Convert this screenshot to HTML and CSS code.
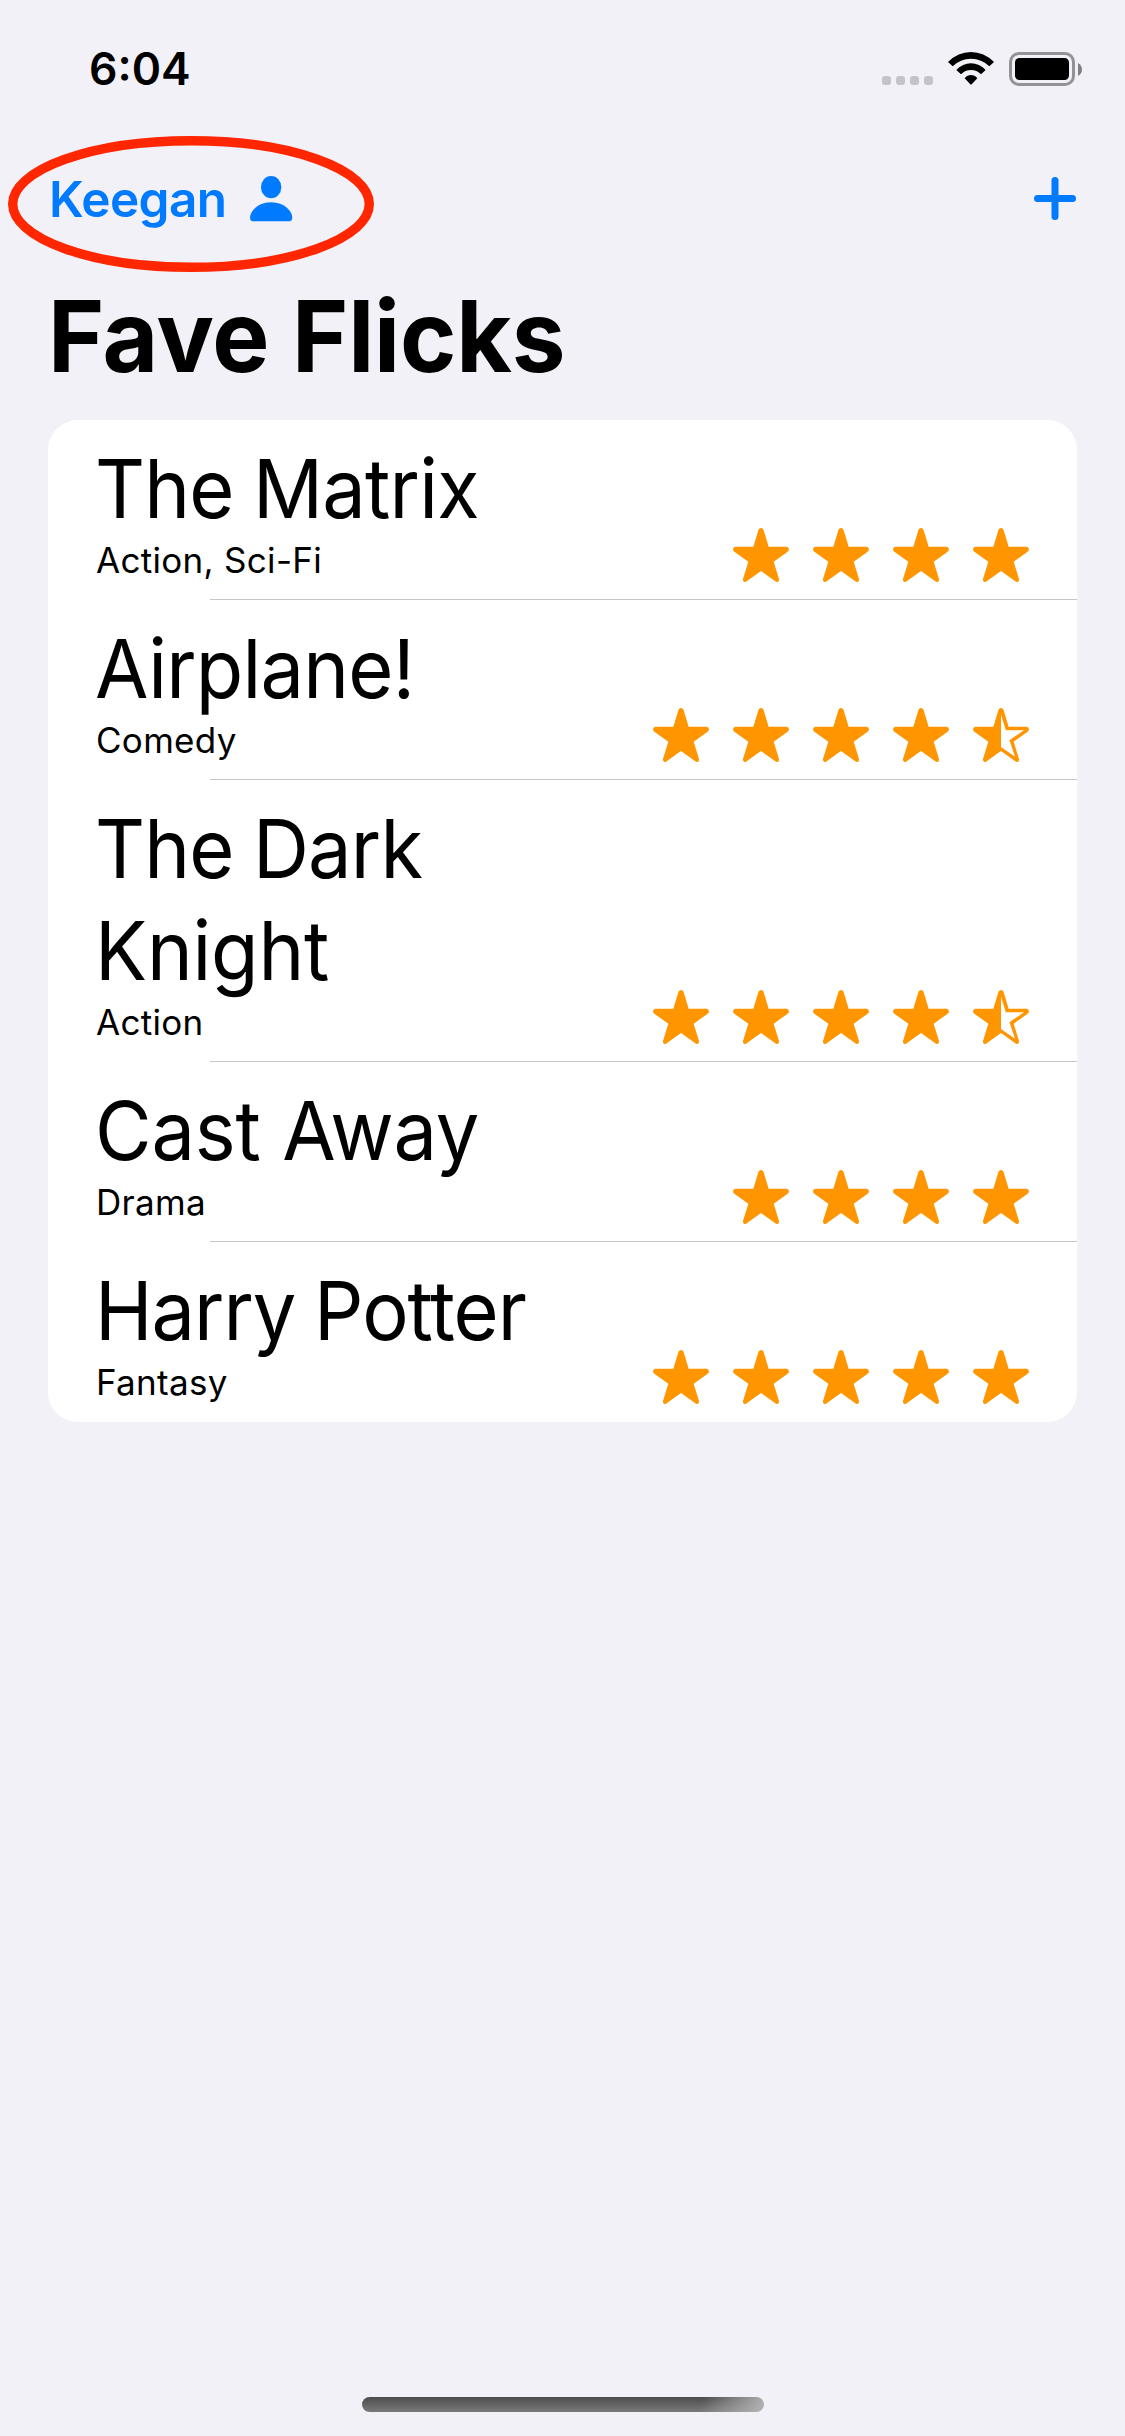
FILE: index.html
```html
<!DOCTYPE html>
<html lang="en">
<head>
<meta charset="utf-8">
<title>Fave Flicks</title>
<link rel="stylesheet" href="styles.css">
</head>
<body>
<svg class="defs" aria-hidden="true">
  <symbol id="star" viewBox="0 0 168 162">
    <path d="M76.500 5Q78.500 0 84 0Q89.500 0 91.500 5L107 56H160Q168 57 168 64Q168 68 164 71L122 101L138 153Q139 160 133 162Q130 162.500 127 160L84 129L41 160Q38 162.500 35 162Q29 160 30 153L46 101L4 71Q0 68 0 64Q0 57 8 56H61Z"/>
  </symbol>
  <symbol id="star-half" viewBox="0 0 168 162">
    <path fill-rule="evenodd" d="M76.500 5Q78.500 0 84 0Q89.500 0 91.500 5L107 56H160Q168 57 168 64Q168 68 164 71L122 101L138 153Q139 160 133 162Q130 162.500 127 160L84 129L41 160Q38 162.500 35 162Q29 160 30 153L46 101L4 71Q0 68 0 64Q0 57 8 56H61ZM84 20V117L124 145Q126 146 125.500 144L110 99Q109 97 111 95L151 68.500Q153 67 151 67H101Q98.500 67 98 65Z"/>
  </symbol>
</svg>
<div class="screen">
  <header class="status-bar">
    <span class="clock">6:04</span>
    <div class="indicators">
      <div class="cellular"><i></i><i></i><i></i><i></i></div>
      <svg class="wifi" viewBox="0 0 138 99">
        <path d="M0 30Q30 0 69 0Q108 0 138 30L124 43Q101 20 69 20Q37 20 14 43Z"/>
        <path d="M25 54Q44 34 69 34Q94 34 113 54L99 67Q87 54 69 54Q51 54 39 67Z"/>
        <path d="M50 79Q58 69 69 69Q80 69 88 79L71 97Q69 99 67 97Z"/>
      </svg>
      <div class="battery"><div class="battery-case"><div class="battery-level"></div></div>
        <svg class="battery-tip" viewBox="0 0 4 13"><path d="M0 0Q4 2.500 4 6.500Q4 10.500 0 13Z"/></svg>
      </div>
    </div>
  </header>
  <nav class="nav-bar">
    <a class="account">
      <span>Keegan</span>
      <svg class="person" viewBox="0 0 127 136"><ellipse cx="63.500" cy="33.500" rx="30.500" ry="33.500"/><path d="M12 136Q0 136 0 125C0 108 22 79 63.500 79S127 108 127 125Q127 136 115 136Z"/></svg>
      <svg class="highlight" viewBox="0 0 366 136"><ellipse cx="183" cy="68" rx="178.300" ry="63.300"/></svg>
    </a>
    <svg class="add" viewBox="0 0 42 43"><path d="M21 3.500V39.500M3.500 21.500H38.500"/></svg>
  </nav>
  <h1 class="page-title">Fave Flicks</h1>
  <main class="movies">
    <article class="movie">
      <div class="info"><h2>The Matrix</h2><p>Action, Sci-Fi</p></div>
      <div class="rating"><svg><use href="#star"/></svg><svg><use href="#star"/></svg><svg><use href="#star"/></svg><svg><use href="#star"/></svg></div>
    </article>
    <article class="movie">
      <div class="info"><h2>Airplane!</h2><p>Comedy</p></div>
      <div class="rating"><svg><use href="#star"/></svg><svg><use href="#star"/></svg><svg><use href="#star"/></svg><svg><use href="#star"/></svg><svg><use href="#star-half"/></svg></div>
    </article>
    <article class="movie">
      <div class="info"><h2>The Dark<br><span class="loose">Knight</span></h2><p>Action</p></div>
      <div class="rating"><svg><use href="#star"/></svg><svg><use href="#star"/></svg><svg><use href="#star"/></svg><svg><use href="#star"/></svg><svg><use href="#star-half"/></svg></div>
    </article>
    <article class="movie">
      <div class="info"><h2 class="loose">Cast Away</h2><p>Drama</p></div>
      <div class="rating"><svg><use href="#star"/></svg><svg><use href="#star"/></svg><svg><use href="#star"/></svg><svg><use href="#star"/></svg></div>
    </article>
    <article class="movie">
      <div class="info"><h2 class="tight">Harry Potter</h2><p>Fantasy</p></div>
      <div class="rating"><svg><use href="#star"/></svg><svg><use href="#star"/></svg><svg><use href="#star"/></svg><svg><use href="#star"/></svg><svg><use href="#star"/></svg></div>
    </article>
  </main>
  <div class="home-indicator"></div>
</div>
</body>
</html>
```
FILE: styles.css
```css
* { box-sizing: border-box; }
body { margin: 0; background: #f2f1f7; color: #000; font-family: Inter, "Liberation Sans", sans-serif; }
h1, h2, p { margin: 0; }
svg { display: block; flex: none; }
.defs { display: none; }
.screen { display: flex; flex-direction: column; width: 1125px; height: 2436px; padding-bottom: 24px; }

.status-bar { display: flex; align-items: center; justify-content: space-between; height: 132px; padding: 6px 43px 0 89px; }
.clock { font-size: 44.5px; font-weight: 600; line-height: 54px; }
.indicators { display: flex; height: 34px; }
.cellular { display: flex; gap: 5px; align-items: flex-end; padding-bottom: 1px; margin-right: 15px; }
.cellular i { width: 9px; height: 9px; border-radius: 3px; background: #c4c3c9; }
.wifi { width: 46px; height: 33px; margin-right: 15px; }
.battery { display: flex; align-items: center; gap: 3px; }
.battery-case { width: 66px; height: 34px; padding: 3px; border: 3px solid #939297; border-radius: 10px; }
.battery-level { height: 100%; border-radius: 4.500px; background: #000; }
.battery-tip { width: 4px; height: 13px; fill: #807f84; }

.nav-bar { display: flex; align-items: center; justify-content: space-between; height: 132px; padding: 2px 49px 0 49px; color: #007aff; }
.account { position: relative; display: flex; align-items: center; gap: 24px; font-size: 49.5px; font-weight: 570; line-height: 60px; letter-spacing: -0.600px; }
.person { width: 42.300px; height: 45.300px; fill: currentColor; }
.highlight { position: absolute; left: -41.500px; top: -33px; width: 366px; height: 136px; fill: none; stroke: #ff2600; stroke-width: 9.400; }
.add { width: 42px; height: 43px; margin-bottom: 1px; fill: none; stroke: currentColor; stroke-width: 7; stroke-linecap: round; }

.page-title { height: 156px; padding: 12px 48px 0; font-size: 99px; font-weight: 700; line-height: 120px; letter-spacing: -0.150px; transform: scaleX(0.970); transform-origin: 48px 0; }

.movies { margin: 0 48px; border-radius: 30px; background: #fff; }
.movie { position: relative; display: flex; align-items: flex-end; justify-content: space-between; padding: 18px 48px 18px 47px; }
.movie:not(:last-child)::after { content: ""; position: absolute; left: 162px; right: 0; bottom: 0; height: 1px; background: #c6c6c8; }
.info h2 { font-size: 81.600px; font-weight: 400; line-height: 102px; letter-spacing: -0.800px; word-spacing: -2px; transform: scaleX(0.950); transform-origin: 0 0; }
.info .loose { letter-spacing: -0.200px; word-spacing: 0; }
.info h2.tight { letter-spacing: -1.100px; }
.info p { margin: -1px 0 1px; padding-left: 1px; font-size: 35px; line-height: 42px; letter-spacing: 0.300px; }
.rating { display: flex; gap: 24px; fill: #ff9500; }
.rating svg { width: 56px; height: 54px; }

.home-indicator { width: 402px; height: 15px; margin: auto auto 0; border-radius: 8px; background: linear-gradient(110deg, transparent 84%, #b4b4b4 100%), linear-gradient(#4c4c4c, #7a7a7a); }
```
